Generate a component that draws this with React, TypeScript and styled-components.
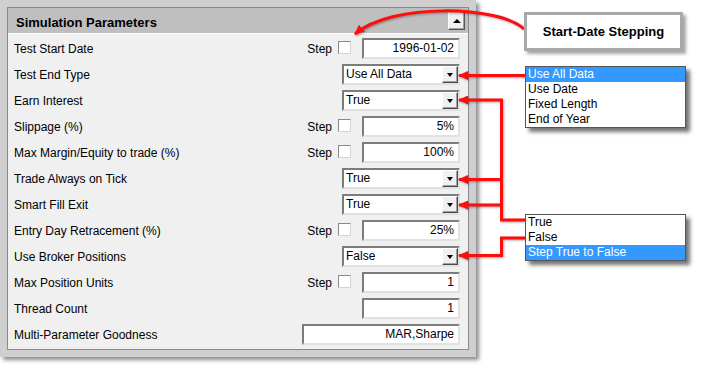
import React from 'react';
import styled, { createGlobalStyle } from 'styled-components';

const GlobalStyle = createGlobalStyle`
  html, body { margin: 0; padding: 0; background: #fff; }
  body {
    font-family: "Liberation Sans", Arial, sans-serif;
    font-size: 12px;
    color: #000;
  }
`;

const Page = styled.div`
  position: relative;
  width: 710px;
  height: 368px;
  overflow: hidden;
  background: #fff;
`;

const Panel = styled.div`
  width: 476px;
  box-sizing: border-box;
  border: 7px solid #cfcfcf;
  box-shadow: 3px 3px 4px rgba(0, 0, 0, 0.45);
`;

const Inner = styled.div`
  border: 1px solid #8a8a8a;
  background: #f0f0f0;
  padding-bottom: 3px;
`;

const Header = styled.div`
  height: 25px;
  background: #bfbfbf;
  border-bottom: 1px solid #fff;
  display: flex;
  align-items: stretch;
  justify-content: space-between;
  padding: 0 3px 0 8px;
`;

const Title = styled.div`
  font-weight: bold;
  font-size: 13px;
  line-height: 21px;
  padding-top: 4px;
`;

const ScrollButton = styled.div`
  align-self: center;
  width: 17px;
  height: 19px;
  box-sizing: border-box;
  background: #f0f0f0;
  border: 1px solid;
  border-color: #fff #555 #555 #fff;
  box-shadow: inset -1px -1px 0 #a0a0a0;
  display: flex;
  align-items: center;
  justify-content: center;
`;

const UpTriangle = styled.span`
  width: 0;
  height: 0;
  border-left: 4px solid transparent;
  border-right: 4px solid transparent;
  border-bottom: 4px solid #000;
`;

const DownTriangle = styled.span`
  width: 0;
  height: 0;
  border-left: 3px solid transparent;
  border-right: 3px solid transparent;
  border-top: 4px solid #000;
`;

const Row = styled.div`
  height: 26px;
  box-sizing: border-box;
  padding: 3px 8px 0 6px;
  display: flex;
  align-items: center;
`;

const Label = styled.div`
  flex: 1;
  white-space: nowrap;
`;

const StepText = styled.span`
  margin-right: 6px;
`;

const CheckBox = styled.span`
  width: 13px;
  height: 13px;
  box-sizing: border-box;
  background: #fff;
  border: 1px solid;
  border-color: #8a8a8a #d4d4d4 #d4d4d4 #8a8a8a;
  margin-right: 11px;
  margin-bottom: 2px;
`;

const TextField = styled.div<{ $width: number }>`
  width: ${(p) => p.$width}px;
  height: 21px;
  box-sizing: border-box;
  background: #fff;
  border: 2px solid;
  border-color: #7c7c7c #e2e2e2 #e2e2e2 #7c7c7c;
  text-align: right;
  padding-right: 4px;
  line-height: 17px;
  white-space: nowrap;
`;

const Select = styled.div`
  width: 118px;
  height: 21px;
  box-sizing: border-box;
  background: #fff;
  border: 2px solid;
  border-color: #7c7c7c #e2e2e2 #e2e2e2 #7c7c7c;
  display: flex;
  align-items: stretch;
`;

const SelectValue = styled.div`
  flex: 1;
  padding-left: 2px;
  line-height: 17px;
  white-space: nowrap;
`;

const SelectButton = styled.div`
  width: 16px;
  box-sizing: border-box;
  background: #f0f0f0;
  border: 1px solid;
  border-color: #fff #4a4a4a #4a4a4a #fff;
  box-shadow: inset -1px -1px 0 #a0a0a0;
  display: flex;
  align-items: center;
  justify-content: center;
`;

const Callout = styled.div`
  position: absolute;
  left: 524px;
  top: 12px;
  width: 159px;
  height: 39px;
  box-sizing: border-box;
  border: 3px solid #a8a8a8;
  background: #fff;
  box-shadow: 3px 3px 3px rgba(0, 0, 0, 0.35);
  display: flex;
  align-items: center;
  justify-content: center;
  font-weight: bold;
  font-size: 13px;
`;

const PopupList = styled.div<{ $top: number }>`
  position: absolute;
  left: 525px;
  top: ${(p) => p.$top}px;
  width: 161px;
  box-sizing: border-box;
  border: 1px solid #555;
  background: #fff;
  box-shadow: 4px 4px 4px rgba(0, 0, 0, 0.55);
`;

const ListItem = styled.div<{ $active?: boolean }>`
  height: 15px;
  line-height: 15px;
  padding-left: 2px;
  white-space: nowrap;
  background: ${(p) => (p.$active ? '#3399ff' : '#fff')};
  color: ${(p) => (p.$active ? '#fff' : '#000')};
`;

const ArrowLayer = styled.svg`
  position: absolute;
  left: 0;
  top: 0;
  pointer-events: none;
  filter: drop-shadow(1px 1px 1px rgba(0, 0, 0, 0.35));
`;

type RowDef = {
  label: string;
  kind: 'text' | 'select';
  value: string;
  step?: boolean;
  width?: number;
};

const rows: RowDef[] = [
  { label: 'Test Start Date', kind: 'text', value: '1996-01-02', step: true },
  { label: 'Test End Type', kind: 'select', value: 'Use All Data' },
  { label: 'Earn Interest', kind: 'select', value: 'True' },
  { label: 'Slippage (%)', kind: 'text', value: '5%', step: true },
  { label: 'Max Margin/Equity to trade (%)', kind: 'text', value: '100%', step: true },
  { label: 'Trade Always on Tick', kind: 'select', value: 'True' },
  { label: 'Smart Fill Exit', kind: 'select', value: 'True' },
  { label: 'Entry Day Retracement (%)', kind: 'text', value: '25%', step: true },
  { label: 'Use Broker Positions', kind: 'select', value: 'False' },
  { label: 'Max Position Units', kind: 'text', value: '1', step: true },
  { label: 'Thread Count', kind: 'text', value: '1' },
  { label: 'Multi-Parameter Goodness', kind: 'text', value: 'MAR,Sharpe', width: 158 },
];

const RED = '#ff0d0d';

export default function App() {
  return (
    <Page>
      <GlobalStyle />
      <Panel>
        <Inner>
          <Header>
            <Title>Simulation Parameters</Title>
            <ScrollButton>
              <UpTriangle />
            </ScrollButton>
          </Header>
          {rows.map((r) => (
            <Row key={r.label}>
              <Label>{r.label}</Label>
              {r.step && (
                <>
                  <StepText>Step</StepText>
                  <CheckBox />
                </>
              )}
              {r.kind === 'text' ? (
                <TextField $width={r.width ?? 98}>{r.value}</TextField>
              ) : (
                <Select>
                  <SelectValue>{r.value}</SelectValue>
                  <SelectButton>
                    <DownTriangle />
                  </SelectButton>
                </Select>
              )}
            </Row>
          ))}
        </Inner>
      </Panel>

      <ArrowLayer width={710} height={368} viewBox="0 0 710 368">
        <defs>
          <marker
            id="ah"
            markerUnits="userSpaceOnUse"
            markerWidth="10"
            markerHeight="9"
            viewBox="0 0 10 9"
            refX="9"
            refY="4.5"
            orient="auto"
          >
            <path d="M0,0 L10,4.5 L0,9 z" fill={RED} />
          </marker>
        </defs>
        <g fill="none" stroke={RED} strokeWidth={3} strokeLinejoin="miter">
          <path d="M 524 29 C 500 6, 392 2, 355 34" markerEnd="url(#ah)" />
          <path d="M 525 75.5 H 459" markerEnd="url(#ah)" />
          <path d="M 525 220 H 501.5 V 100 H 459" markerEnd="url(#ah)" />
          <path d="M 501.5 179.5 H 459" markerEnd="url(#ah)" />
          <path d="M 501.5 205 H 459" markerEnd="url(#ah)" />
          <path d="M 525 238 H 501.5 V 255.5 H 459" markerEnd="url(#ah)" />
        </g>
      </ArrowLayer>

      <Callout>Start-Date Stepping</Callout>

      <PopupList $top={66}>
        <ListItem $active>Use All Data</ListItem>
        <ListItem>Use Date</ListItem>
        <ListItem>Fixed Length</ListItem>
        <ListItem>End of Year</ListItem>
      </PopupList>

      <PopupList $top={214}>
        <ListItem>True</ListItem>
        <ListItem>False</ListItem>
        <ListItem $active>Step True to False</ListItem>
      </PopupList>
    </Page>
  );
}
